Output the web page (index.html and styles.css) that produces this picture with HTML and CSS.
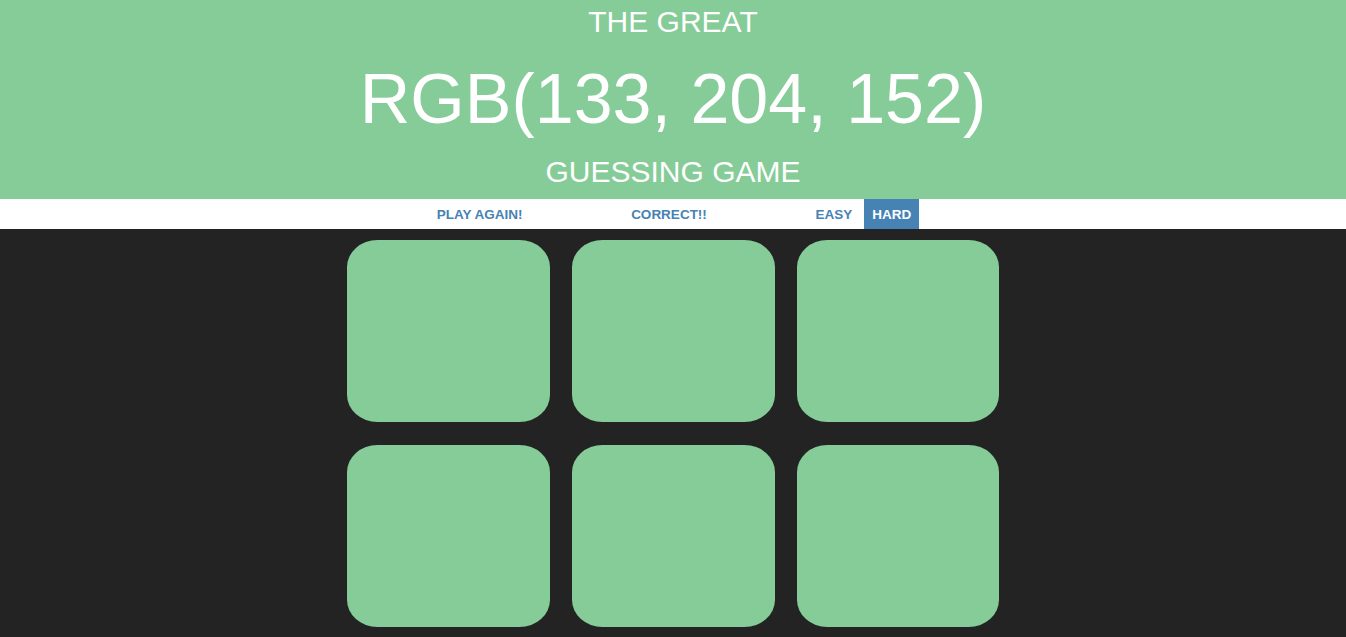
FILE: index.html
```
<!DOCTYPE html>
<html lang="en">
<head>
<meta charset="utf-8">
<title>Color Game</title>
<link rel="stylesheet" href="styles.css">
</head>
<body>
<h1 class="title">
  <span class="title-small first">The Great</span>
  <span class="color-display">RGB(133, 204, 152)</span>
  <span class="title-small last">Guessing Game</span>
</h1>
<div class="stripe">
  <button class="btn">Play Again!</button>
  <span class="message">Correct!!</span>
  <button class="btn">Easy</button>
  <button class="btn selected">Hard</button>
</div>
<div class="board">
  <div class="square"></div>
  <div class="square"></div>
  <div class="square"></div>
  <div class="square"></div>
  <div class="square"></div>
  <div class="square"></div>
</div>
</body>
</html>
```

FILE: styles.css
```
html, body {
  margin: 0;
  padding: 0;
}

body {
  background: #232323;
  font-family: "Liberation Sans", Arial, sans-serif;
  height: 637px;
  overflow: hidden;
}

.title {
  margin: 0;
  padding: 0 0 11px;
  background: rgb(133, 204, 152);
  color: #ffffff;
  font-weight: normal;
  text-align: center;
  text-transform: uppercase;
  display: flex;
  flex-direction: column;
}

.title-small {
  display: block;
  font-size: 30px;
}

.title-small.first {
  line-height: 43px;
}

.title-small.last {
  line-height: 32px;
}

.color-display {
  display: block;
  font-size: 70px;
  line-height: 113px;
}

.stripe {
  background: #ffffff;
  height: 30px;
  padding-left: 2px;
  display: flex;
  justify-content: center;
  align-items: stretch;
  gap: 4px;
}

.btn {
  border: none;
  background: none;
  margin: 0;
  padding: 1px 8px 0;
  height: 30px;
  font-family: "Liberation Sans", Arial, sans-serif;
  font-weight: 700;
  font-size: 13.5px;
  color: #4682b4;
  text-transform: uppercase;
  cursor: pointer;
}

.btn.selected {
  background: #4682b4;
  color: #ffffff;
}

.message {
  width: 20%;
  text-align: center;
  line-height: 30px;
  padding-top: 1px;
  box-sizing: border-box;
  font-weight: 700;
  font-size: 13.5px;
  color: #4682b4;
  text-transform: uppercase;
}

.board {
  width: 652px;
  margin: 11px auto 0;
  display: grid;
  grid-template-columns: 203px 203px 202px;
  grid-auto-rows: 182px;
  column-gap: 22px;
  row-gap: 23px;
}

.square {
  background: rgb(133, 204, 152);
  border-radius: 15%;
}
```
